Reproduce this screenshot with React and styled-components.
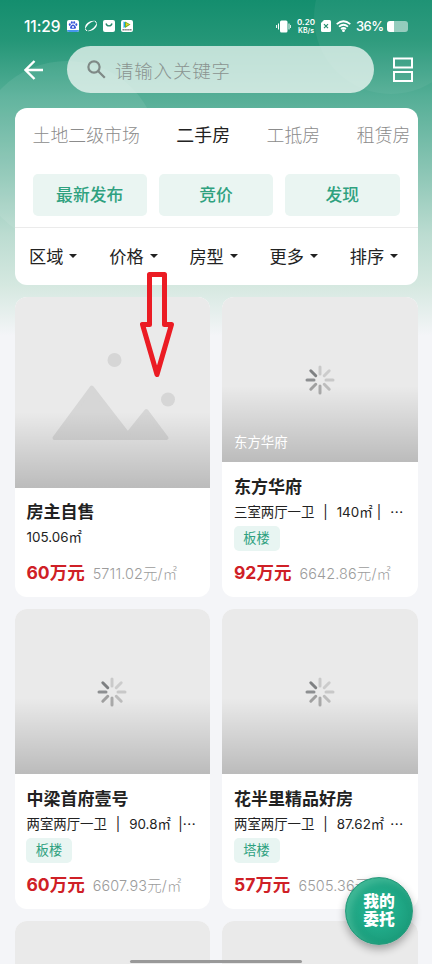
import styled, { createGlobalStyle } from 'styled-components'

const GlobalStyle = createGlobalStyle`
  * {
    box-sizing: border-box;
  }

  html, body {
    margin: 0;
    height: 964px;
    overflow: hidden;
  }

  body {
    background: #f4f5f8;
    color: #222;
    font-family: Inter, 'Noto Sans CJK SC', sans-serif;
    white-space: nowrap;
  }
`

const Page = styled.div`
  position: relative;
  width: 432px;
  height: 964px;
  overflow: hidden;
  background: linear-gradient(
    #148e6e 0,
    #249677 40px,
    #54ae96 96px,
    #8ac5b4 170px,
    #bcdcd1 235px,
    #d5e8e0 285px,
    #f4f5f8 336px
  );
`

const Bubble = styled.div`
  position: absolute;
  left: ${p => p.$x}px;
  top: ${p => p.$y}px;
  width: ${p => p.$size}px;
  height: ${p => p.$size}px;
  border-radius: 50%;
  background: rgba(255, 255, 255, ${p => p.$alpha});
`

const Content = styled.div`
  position: relative;
`

const StatusBar = styled.div`
  display: flex;
  align-items: center;
  justify-content: space-between;
  height: 46px;
  padding: 6px 24px 0;
  color: #fff;
`

const StatusGroup = styled.div`
  display: flex;
  align-items: center;
  gap: ${p => p.$gap}px;
`

const Clock = styled.span`
  width: 37px;
  font-size: 15.5px;
  font-weight: 500;
  letter-spacing: -0.1px;
`

const Speed = styled.div`
  width: 20px;
  font-size: 8px;
  font-weight: 600;
  line-height: 9px;
  text-align: center;

  span {
    display: block;
    font-size: 7px;
    line-height: 8px;
  }
`

const Percent = styled.span`
  width: 26px;
  font-size: 13px;
  font-weight: 500;
  letter-spacing: -0.6px;
`

const Battery = styled.div`
  width: 21px;
  height: 11px;
  border-radius: 3px;
  background: linear-gradient(90deg, #fff 7px, rgba(255, 255, 255, 0.5) 7px);
`

const SearchRow = styled.div`
  display: flex;
  align-items: center;
  height: 47px;
  padding: 0 18px 0 24px;
`

const SearchBox = styled.div`
  display: flex;
  align-items: center;
  gap: 9px;
  width: 307px;
  height: 47px;
  margin: 0 19px 0 24px;
  padding: 0 20px;
  border-radius: 24px;
  background: rgba(244, 250, 247, 0.74);
  color: #8a9390;
  font-size: 18.5px;
  font-weight: 300;
  letter-spacing: 0.8px;
`

const Panel = styled.div`
  width: 403px;
  height: 177px;
  margin: 15px 0 0 14.5px;
  border-radius: 12px;
  background: #fff;
  overflow: hidden;
`

const Tabs = styled.div`
  display: flex;
  gap: 36.5px;
  height: 54px;
  padding-left: 18px;
  line-height: 55px;
`

const Tab = styled.span`
  color: ${p => p.$active ? '#222' : '#8c8c8c'};
  font-size: 17.9px;
  font-weight: ${p => p.$active ? 400 : 300};
`

const Buttons = styled.div`
  display: grid;
  grid-template-columns: repeat(3, 1fr);
  gap: 12px;
  height: 65.5px;
  padding: 12px 18px;
  border-bottom: 1px solid #ebebeb;
`

const Button = styled.div`
  border-radius: 5px;
  background: #eaf5f2;
  color: #2fa17f;
  font-size: 16.8px;
  font-weight: 500;
  line-height: 42px;
  text-align: center;
`

const Filters = styled.div`
  display: grid;
  grid-template-columns: repeat(5, 80.2px);
  height: 57px;
  padding-left: 14.5px;
  line-height: 57px;
`

const Filter = styled.div`
  display: flex;
  align-items: center;
  gap: 6px;
  font-size: 17.2px;

  &::after {
    content: '';
    border: 4px solid transparent;
    border-top-color: #222;
    border-bottom: 0;
  }
`

const Columns = styled.div`
  display: grid;
  grid-template-columns: 195.5px 195.5px;
  gap: 12px;
  margin: 12px 0 0 14.5px;
`

const Column = styled.div`
  display: flex;
  flex-direction: column;
  gap: 12px;
`

const Card = styled.div`
  height: 300px;
  border-radius: 12px;
  background: #fff;
  overflow: hidden;
`

const Cover = styled.div`
  position: relative;
  display: flex;
  align-items: center;
  justify-content: center;
  height: ${p => p.$tall ? 191 : 165}px;
  background: #eaeaea;

  &::after {
    content: '';
    position: absolute;
    inset: auto 0 0;
    height: 76px;
    background: linear-gradient(rgba(0, 0, 0, 0), rgba(0, 0, 0, 0.2));
  }
`

const Caption = styled.span`
  position: absolute;
  z-index: 1;
  left: 12px;
  bottom: 11.5px;
  color: #fff;
  font-size: 13.4px;
  line-height: 18px;
`

const Info = styled.div`
  padding: ${p => p.$tall ? 11.5 : 12.5}px 14px 0 12px;
`

const Title = styled.div`
  font-size: 17px;
  font-weight: 700;
  line-height: 25px;
`

const Detail = styled.div`
  display: flex;
  justify-content: space-between;
  height: 26px;
  font-size: 13.4px;
  line-height: 25px;

  pre {
    margin: 0;
    font: inherit;
    word-spacing: 0.7px;
  }
`

const Tag = styled.span`
  display: block;
  width: 46px;
  height: 25px;
  margin-left: -0.5px;
  border-radius: 5px;
  background: #e8f5f2;
  color: #2fa17f;
  font-size: 13.2px;
  line-height: 24px;
  text-align: center;
`

const PriceRow = styled.div`
  display: flex;
  align-items: baseline;
  gap: 8px;
  margin-top: 8.5px;
  line-height: 28px;
`

const Price = styled.span`
  color: #cf2026;
  font-size: 17.5px;
  font-weight: 700;
`

const UnitPrice = styled.span`
  color: #9c9c9c;
  font-size: 14.4px;
  font-weight: 300;
  letter-spacing: 0.15px;
`

const FloatButton = styled.div`
  position: absolute;
  left: 345px;
  top: 877px;
  display: flex;
  flex-direction: column;
  justify-content: center;
  width: 68px;
  height: 68px;
  border-radius: 50%;
  border: 1px solid #2a9a7c;
  background: radial-gradient(circle at 50% 48%, #21ac8a 35%, #168f6e 100%);
  box-shadow: 0 4px 9px rgba(0, 0, 0, 0.32), inset 5px 4px 7px rgba(100, 210, 175, 0.5);
  color: #fff;
  font-size: 15.8px;
  font-weight: 900;
  line-height: 18px;
  text-align: center;
`

const HomeBar = styled.div`
  position: absolute;
  left: 130px;
  top: 960px;
  width: 172px;
  height: 3px;
  border-radius: 2px;
  background: #999;
`

const ArrowMark = styled.svg`
  position: absolute;
  left: 138px;
  top: 270px;
`

const Icon = styled.svg`
  display: block;
  flex: none;
`

const columns = [
  [
    { title: '房主自售', area: '105.06㎡', price: '60', unit: '5711.02', tall: true },
    { title: '中梁首府壹号', detail: '两室两厅一卫', area: '90.8㎡', tail: '|⋯', tag: '板楼', price: '60', unit: '6607.93' },
    {},
  ],
  [
    { title: '东方华府', caption: '东方华府', detail: '三室两厅一卫', area: '140㎡', tail: '|  ⋯', tag: '板楼', price: '92', unit: '6642.86' },
    { title: '花半里精品好房', detail: '两室两厅一卫', area: '87.62㎡', tail: '⋯', tag: '塔楼', price: '57', unit: '6505.36' },
    {},
  ],
]

const spokes = ['#c9c9c9', '#cccccc', '#c8c8c8', '#bdbdbd', '#aaaaaa', '#a0a0a0', '#8d8f91', '#7e8082']

const Spinner = () => (
  <Icon width="30" height="30" viewBox="-15 -15 30 30">
    {spokes.map((color, i) => (
      <path
        key={color}
        d="M0-6V-13"
        stroke={color}
        strokeWidth="3"
        strokeLinecap="round"
        transform={`rotate(${i * 45})`}
      />
    ))}
  </Icon>
)

const Mountains = () => (
  <Icon width="195.5" height="191" viewBox="0 0 195.5 191" fill="#d6d6d6">
    <circle cx="99.5" cy="63" r="7" />
    <circle cx="153" cy="102.5" r="7" />
    <path
      d="M39.5 141 76.8 90.5 112.8 137 131.3 114 151.5 141Z"
      stroke="#d6d6d6"
      strokeWidth="4"
      strokeLinejoin="round"
    />
  </Icon>
)

const House = ({ item }) => (
  <Card>
    <Cover $tall={item.tall}>
      {item.tall ? <Mountains /> : item.title && <Spinner />}
      {item.caption && <Caption>{item.caption}</Caption>}
    </Cover>
    {item.title && (
      <Info $tall={item.tall}>
        <Title>{item.title}</Title>
        <Detail>
          <pre>{item.detail ? `${item.detail}  |  ${item.area}` : item.area}</pre>
          {item.tail && <pre>{item.tail}</pre>}
        </Detail>
        {item.tag && <Tag>{item.tag}</Tag>}
        <PriceRow>
          <Price>{item.price}万元</Price>
          <UnitPrice>{item.unit}元/㎡</UnitPrice>
        </PriceRow>
      </Info>
    )}
  </Card>
)

const Status = () => (
  <StatusBar>
    <StatusGroup $gap={6}>
      <Clock>11:29</Clock>
      <Icon width="12" height="12" viewBox="0 0 12 12">
        <rect width="12" height="12" rx="2" fill="#fff" />
        <path d="M0 10h12a2 2 0 0 1-2 2H2a2 2 0 0 1-2-2Z" fill="#4696ee" />
        <g fill="#3555d8">
          <ellipse cx="2.8" cy="4.6" rx="1" ry="1.3" />
          <ellipse cx="4.8" cy="2.5" rx="1" ry="1.3" />
          <ellipse cx="7.2" cy="2.5" rx="1" ry="1.3" />
          <ellipse cx="9.3" cy="4.6" rx="1" ry="1.3" />
          <path d="M6 4.4c1.3 0 3 2.1 3 3.2C9 9.3 7.2 8.8 6 8.8s-3 .5-3-1.2c0-1.1 1.7-3.2 3-3.2Z" />
        </g>
        <circle cx="6" cy="7" r="1" fill="#fff" />
      </Icon>
      <Icon width="12" height="12" viewBox="0 0 12 12" fill="#fff">
        <path d="M0 9C-.5 4 4.500 0 10.500 1 6 1.500 2.500 4.500 0 9Z" />
        <path d="M12 3c.5 5-4.500 9-10.500 8C6 10.500 9.500 7.500 12 3Z" />
        <path d="M0 8.500 1.800 11M10 1l1.800 2.500" stroke="#fff" />
      </Icon>
      <Icon width="12" height="12" viewBox="0 0 12 12">
        <rect width="12" height="12" rx="2" fill="#fff" />
        <path d="M3 3.5c1 3.2 5 3.2 6 0" fill="none" stroke="#26886b" strokeWidth="1.4" />
      </Icon>
      <Icon width="12" height="12" viewBox="0 0 12 12">
        <rect width="12" height="12" rx="2" fill="#fff" />
        <path d="M2.500 1.5 6 3v3L2.500 8Z" fill="#26a5ed" />
        <path d="m4 1.500 5.500 3L4 8Z" fill="#68b928" />
        <path d="m5 3 3 1.5L5 6Z" fill="#ffc326" />
        <path d="M1.500 9.800h9" stroke="#777" strokeWidth="1.4" strokeDasharray="1.4 .5" />
      </Icon>
    </StatusGroup>
    <StatusGroup $gap={5}>
      <Icon width="15" height="13" viewBox="0 0 15 13" fill="#fff">
        <rect x="4" y=".5" width="7.5" height="12" rx="1.5" />
        <path d="M2.5 3.5v6M13 3.5v6M.6 5v3M14.7 5v3" stroke="#fff" />
      </Icon>
      <Speed>0.20<span>KB/s</span></Speed>
      <Icon width="10" height="12" viewBox="0 0 10 12">
        <path d="M3 0h5.5A1.5 1.5 0 0 1 10 1.5v9A1.5 1.5 0 0 1 8.5 12h-7A1.5 1.5 0 0 1 0 10.5V3Z" fill="#fff" />
        <path d="m3 4.2 4 4m0-4-4 4" stroke="#258d6e" strokeWidth="1.2" />
      </Icon>
      <Icon width="15" height="12" viewBox="0 0 15 12" fill="none" stroke="#fff" strokeWidth="1.7">
        <path d="M.7 4.2Q7.5-1.7 14.3 4.2M3 6.7q4.5-3.9 9 0M5 9q2.5-2 5 0" />
        <circle cx="7.5" cy="10.6" r=".6" fill="#fff" />
      </Icon>
      <Percent>36%</Percent>
      <Battery />
    </StatusGroup>
  </StatusBar>
)

const App = () => (
  <Page>
    <GlobalStyle />
    <Bubble $x={-25} $y={61} $size={184} $alpha={0.08} />
    <Bubble $x={314} $y={-60} $size={154} $alpha={0.05} />
    <Content>
      <Status />
      <SearchRow>
        <Icon width="19" height="20" viewBox="0 0 19 20" fill="none" stroke="#fff" strokeWidth="2.4">
          <path d="m10.5 1-9 9 9 9M2 10h17" />
        </Icon>
        <SearchBox>
          <Icon width="19" height="19" viewBox="0 0 19 19" fill="none" stroke="#7f8986" strokeWidth="2.2">
            <circle cx="7" cy="7" r="5.6" />
            <path d="m11 11 6.8 6.8" />
          </Icon>
          请输入关键字
        </SearchBox>
        <Icon width="20" height="25" viewBox="0 0 20 25" fill="none" stroke="#fff" strokeWidth="2">
          <path d="M1 1.5h18v9H1ZM1 15h18v9H1Z" />
        </Icon>
      </SearchRow>
      <Panel>
        <Tabs>
          <Tab>土地二级市场</Tab>
          <Tab $active>二手房</Tab>
          <Tab>工抵房</Tab>
          <Tab>租赁房</Tab>
        </Tabs>
        <Buttons>
          <Button>最新发布</Button>
          <Button>竞价</Button>
          <Button>发现</Button>
        </Buttons>
        <Filters>
          {['区域', '价格', '房型', '更多', '排序'].map(name => <Filter key={name}>{name}</Filter>)}
        </Filters>
      </Panel>
      <Columns>
        {columns.map((items, i) => (
          <Column key={i}>
            {items.map((item, j) => <House key={j} item={item} />)}
          </Column>
        ))}
      </Columns>
    </Content>
    <ArrowMark width="40" height="110" viewBox="0 0 40 110" fill="none" stroke="#eb1c24" strokeWidth="5">
      <path d="M11.5 4.5h15v50h7L19 104.5 4.5 54.5h7Z" strokeLinejoin="round" />
    </ArrowMark>
    <HomeBar />
    <FloatButton>
      <span>我的</span>
      <span>委托</span>
    </FloatButton>
  </Page>
)

export default App
